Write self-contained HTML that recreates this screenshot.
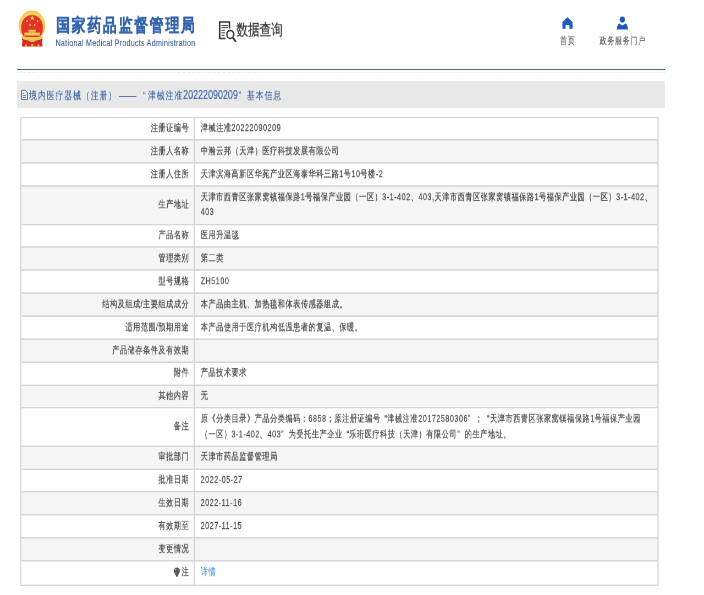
<!DOCTYPE html>
<html><head><meta charset="utf-8">
<style>
html,body{margin:0;padding:0;width:704px;height:595px;overflow:hidden;background:#fff;}
#pg{position:absolute;left:0;top:0;width:1280px;height:800px;will-change:transform;transform-origin:0 0;transform:scale(0.55,0.74375);font-family:"Liberation Sans",sans-serif;color:#555;}
.abs{position:absolute;}
#title{left:102px;top:17px;font-size:25px;letter-spacing:3.4px;font-weight:bold;-webkit-text-stroke:0.6px #3463ad;color:#3463ad;transform:scaleY(0.95);transform-origin:0 0;white-space:nowrap;line-height:34px;}
#sub{left:101px;top:50px;font-size:13px;letter-spacing:0.45px;color:#45619a;-webkit-text-stroke:0.2px #45619a;white-space:nowrap;line-height:16px;}
#dq{left:430px;top:26.8px;font-size:20.5px;letter-spacing:0px;color:#3a3a3a;-webkit-text-stroke:0.4px #3a3a3a;white-space:nowrap;line-height:26px;}
#crumb{left:53px;top:117.2px;font-size:14px;letter-spacing:2px;-webkit-text-stroke:0.15px #3d64a4;color:#3d64a4;white-space:nowrap;line-height:20px;}
#nav1{left:1018px;top:46px;font-size:13px;letter-spacing:1px;color:#555;-webkit-text-stroke:0.12px #555;line-height:18px;}
#nav2{left:1090px;top:46px;font-size:13px;letter-spacing:1px;color:#555;-webkit-text-stroke:0.12px #555;line-height:18px;}
table{position:absolute;left:36px;top:156.6px;width:1162px;border-collapse:collapse;table-layout:fixed;}
td{border:2px solid #d6d6d6;border-left-width:3px;border-right-width:3px;font-size:13px;letter-spacing:1px;line-height:20.5px;padding:3.68px 10px 4.69px;color:#4d4d4d;-webkit-text-stroke:0.3px #4d4d4d;}
td.l{text-align:right;width:295.2px;padding-right:7.5px;}
td{white-space:nowrap;}
tr.last td{padding-top:4.4px;padding-bottom:5.7px;}
.qo{margin-left:7.5px;}
.qc{margin-right:8px;}
tr:nth-child(even) td{background:#f5f5f6;}
td:last-child{border-right-color:#e0e0e0;}
td:first-child{border-left-color:#dedede;}
a{color:#4593e0;text-decoration:none;-webkit-text-stroke:0.15px #4593e0;}
.dg{font-size:16.3px;letter-spacing:0;}
.dash{display:inline-block;width:31.5px;height:0;border-top:1.6px solid #3a62a0;vertical-align:middle;margin:0 12.7px 0 3px;position:relative;top:0.4px;}
.ql{letter-spacing:0;margin-left:0;margin-right:4px;}
.qr{letter-spacing:0;margin-left:1px;margin-right:10.7px;}
#ov{position:absolute;left:0;top:0;width:704px;height:595px;}
</style></head><body>
<div style="position:absolute;left:17px;top:81px;width:648px;height:27px;background:#e8e8e8"></div>
<div id="pg">

<div id="title" class="abs">国家药品监督管理局</div>
<div id="sub" class="abs">National Medical Products Administration</div>
<div id="dq" class="abs">数据查询</div>
<div id="nav1" class="abs">首页</div>
<div id="nav2" class="abs">政务服务门户</div>
<div id="crumb" class="abs">境内医疗器械（注册）<span class="dash"></span><span class="ql">“</span>津械注准<span class="dg">20222090209</span><span class="qr">”</span>基本信息</div>
<table>
<tr><td class="l">注册证编号</td><td>津械注准20222090209</td></tr>
<tr><td class="l">注册人名称</td><td>中瀚云邦（天津）医疗科技发展有限公司</td></tr>
<tr><td class="l">注册人住所</td><td>天津滨海高新区华苑产业区海泰华科三路1号10号楼-2</td></tr>
<tr><td class="l">生产地址</td><td>天津市西青区张家窝镇福保路1号福保产业园（一区）3-1-402、403,天津市西青区张家窝镇福保路1号福保产业园（一区）3-1-402、<br>403</td></tr>
<tr><td class="l">产品名称</td><td>医用升温毯</td></tr>
<tr><td class="l">管理类别</td><td>第二类</td></tr>
<tr><td class="l">型号规格</td><td>ZH5100</td></tr>
<tr><td class="l">结构及组成/主要组成成分</td><td>本产品由主机、加热毯和体表传感器组成。</td></tr>
<tr><td class="l">适用范围/预期用途</td><td>本产品使用于医疗机构低温患者的复温、保暖。</td></tr>
<tr><td class="l">产品储存条件及有效期</td><td></td></tr>
<tr><td class="l">附件</td><td>产品技术要求</td></tr>
<tr><td class="l">其他内容</td><td>无</td></tr>
<tr><td class="l">备注</td><td>原《分类目录》产品分类编码：6858；原注册证编号<span class="qo">“</span>津械注准20172580306<span class="qc">”</span>；<span class="qo">“</span>天津市西青区张家窝镇福保路1号福保产业园<br>（一区）3-1-402、403<span class="qc">”</span>为受托生产企业<span class="qo">“</span>乐珩医疗科技（天津）有限公司<span class="qc">”</span>的生产地址。</td></tr>
<tr><td class="l">审批部门</td><td>天津市药品监督管理局</td></tr>
<tr><td class="l">批准日期</td><td>2022-05-27</td></tr>
<tr><td class="l">生效日期</td><td>2022-11-16</td></tr>
<tr><td class="l">有效期至</td><td>2027-11-15</td></tr>
<tr><td class="l">变更情况</td><td></td></tr>
<tr class="last"><td class="l">注</td><td><a>详情</a></td></tr>
</table>
</div>
<div style="position:absolute;left:17px;top:69px;width:648px;height:1px;background:#4d6b82"></div>
<div style="position:absolute;left:17px;top:72px;width:648px;height:1px;background:repeating-linear-gradient(90deg,#e6eef3 0 1.5px,transparent 1.5px 2.5px)"></div>
<svg id="ov" viewBox="0 0 704 595">
 <g id="emb">
  <ellipse cx="32" cy="25.8" rx="13.2" ry="15.2" fill="#f1c04a"/>
  <ellipse cx="32" cy="25.8" rx="12.4" ry="14.4" fill="#f6cf5c"/>
  <path d="M21.2 25.5 A10.9 11.6 0 0 1 42.9 25.5 L42.7 31 Q41.8 36.6 37.6 37 H26.5 Q22.2 36.6 21.4 31Z" fill="#e3322a"/>
  <rect x="24.3" y="32.6" width="15.6" height="2.9" fill="#f7d15a"/>
  <rect x="28.5" y="29.7" width="7.3" height="3" fill="#f1b93c"/>
  <path d="M21.5 36.6 Q32 40.5 42.6 36.6 L42.6 38.4 Q32 42.2 21.5 38.4Z" fill="#f2c244"/>
  <path d="M21.9 38.6 Q23 42.5 21.8 46.6 H42.6 Q41.5 42.5 42.5 38.6 Q37.5 41.4 32.2 39.9 Q27 41.4 21.9 38.6Z" fill="#d52b22"/>
  <path d="M28.2 39.8 Q32.2 37.8 36.2 39.8 Q35 42.6 32.2 41.7 Q29.4 42.6 28.2 39.8Z" fill="#f2c244"/>
  <rect x="25.2" y="44.4" width="1.8" height="2.2" fill="#f2c244"/>
  <rect x="37.4" y="44.4" width="1.8" height="2.2" fill="#f2c244"/>
  <rect x="31.1" y="44" width="2.2" height="2.6" fill="#f2c244"/>
  <path d="M32.2 15.6 L32.9 17.3 L34.6 17.4 L33.3 18.5 L33.7 20.2 L32.2 19.3 L30.7 20.2 L31.1 18.5 L29.8 17.4 L31.5 17.3Z" fill="#f7d24c"/>
  <circle cx="27" cy="21" r="0.9" fill="#f6d04a"/>
  <circle cx="37.5" cy="21" r="0.9" fill="#f6d04a"/>
  <circle cx="30.1" cy="25" r="0.9" fill="#f6d04a"/>
  <circle cx="34.7" cy="25" r="0.9" fill="#f6d04a"/>
 </g>
 <g id="docq" fill="none" stroke="#333">
  <path d="M225.5 38.4 H219.7 V22.1 H229.5 V28.5" stroke-width="1.5"/>
  <path d="M221.4 25.5 H228 M221.4 27.6 H228 M221.4 30.3 H225 M221.4 32.8 H225 M221.4 35.3 H224.5" stroke="#444" stroke-width="1"/>
  <ellipse cx="230.3" cy="34.4" rx="3.4" ry="4" stroke-width="1.5"/>
  <path d="M233 37.8 L235.8 41.8" stroke-width="1.9"/>
 </g>
 <g fill="#1e5cb8">
  <path d="M567.5 17.2 L572.6 21.9 V28.8 H569.4 V24.9 H565.6 V28.8 H562.4 V21.9 Z"/>
  <ellipse cx="622.4" cy="19.5" rx="2.6" ry="3.1"/>
  <path d="M619.2 23.6 L622.4 25.6 L625.6 23.6 Q627.5 24.5 628.1 29.4 H616.7 Q617.3 24.5 619.2 23.6Z"/>
 </g>
 <g fill="none" stroke="#5a7bb0" stroke-width="1">
  <path d="M21.5 90.4 H25.5 L27.5 92.4 V99.6 H21.5 Z"/>
  <path d="M23 93.3 H24 M23 95.5 H26 M23 97.5 H26" stroke-width="0.9"/>
 </g>
 <path d="M176.9 567.4 C175 567.4 173.9 569 173.9 570.8 C173.9 572.8 175.6 574.3 176.1 576.8 H177.7 C178.2 574.3 179.9 572.8 179.9 570.8 C179.9 569 178.8 567.4 176.9 567.4Z" fill="#5a5a5a"/>
 <circle cx="175.6" cy="569.6" r="0.7" fill="#ccc"/>
</svg>
</body></html>
